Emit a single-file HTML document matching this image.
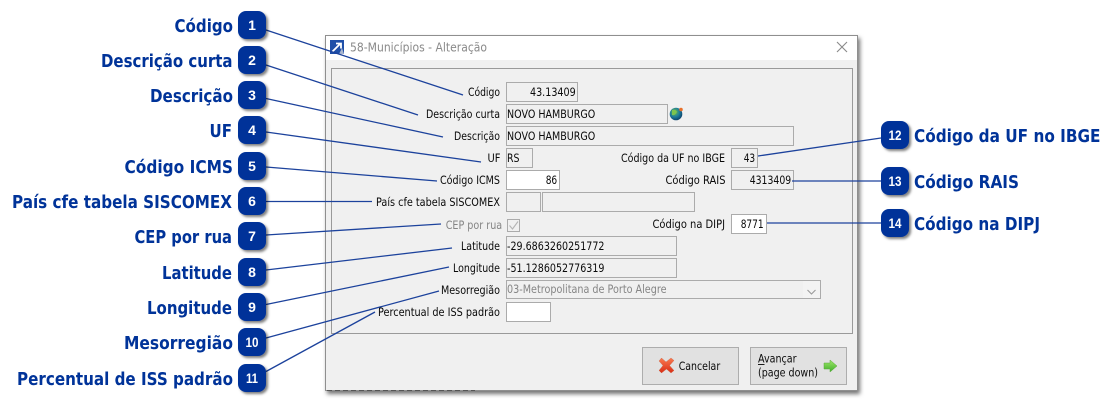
<!DOCTYPE html>
<html lang="pt">
<head>
<meta charset="utf-8">
<title>58-Municípios - Alteração</title>
<style>
html,body{margin:0;padding:0;background:#fff;width:1117px;height:407px;overflow:hidden}
svg{display:block}
.h{font-family:"DejaVu Sans",sans-serif;font-weight:700;font-size:17.5px;fill:#003399}
.n{font-family:"Liberation Sans",sans-serif;font-weight:700;font-size:14px;fill:#fff;text-anchor:middle}
.l{font-family:"DejaVu Sans",sans-serif;font-size:11.5px;fill:#0a0a0a}
.l.g{fill:#858585}
.f{fill:#f0f0f0;stroke:#ababab;stroke-width:1}
.w{fill:#fff;stroke:#ababab;stroke-width:1}
.ln{stroke:#1c429c;stroke-width:1.3;fill:none}
.b{fill:#e1e1e1;stroke:#adadad;stroke-width:1}
</style>
</head>
<body>
<svg width="1117" height="407" viewBox="0 0 1117 407" xmlns="http://www.w3.org/2000/svg">
<defs>
<filter id="s" x="-20%" y="-20%" width="150%" height="150%"><feDropShadow dx="2" dy="2" stdDeviation="1.3" flood-color="#000" flood-opacity=".5"/></filter>
<filter id="d" x="-3%" y="-3%" width="106%" height="106%"><feDropShadow dx="2" dy="3" stdDeviation="2" flood-color="#000" flood-opacity=".55"/></filter>
<radialGradient id="gl" cx=".4" cy=".35" r=".7"><stop offset="0" stop-color="#6fc04a"/><stop offset=".55" stop-color="#1c7a9c"/><stop offset="1" stop-color="#0c3d66"/></radialGradient>
<linearGradient id="ar" x1="0" y1="0" x2="0" y2="1"><stop offset="0" stop-color="#9fe86a"/><stop offset="1" stop-color="#3fae2a"/></linearGradient>
<linearGradient id="xr" x1="0" y1="0" x2="0" y2="1"><stop offset="0" stop-color="#f97a50"/><stop offset="1" stop-color="#d92c14"/></linearGradient>
</defs>

<!-- dialog -->
<rect x="325.5" y="35.5" width="532" height="355" fill="#f0f0f0" stroke="#8f8f8f" filter="url(#d)"/>
<rect x="326" y="36" width="531" height="24" fill="#fff"/>
<rect x="331.5" y="68.5" width="521" height="265" fill="#f0f0f0" stroke="#9a9a9a"/>
<path d="M327 390.500 H475" stroke="#555" stroke-width="1" stroke-dasharray="5 3"/>

<!-- title bar -->
<rect x="330" y="40" width="14" height="14" fill="#1f4fa8"/>
<path d="M332 52 L340 44 M336 43.5 H341 V48.5" stroke="#fff" stroke-width="1.8" fill="none"/>
<path d="M339 54 L342 48 L344 54 Z" fill="#a9b6cf"/>
<text x="350" y="51.500" font-family="DejaVu Sans,sans-serif" font-size="12.5" fill="#8a8a8a" textLength="137" lengthAdjust="spacingAndGlyphs">58-Municípios - Alteração</text>
<path d="M837 42 L847 52 M847 42 L837 52" stroke="#8a8a8a" stroke-width="1.1" fill="none"/>

<!-- fields -->
<rect class="f" x="506.5" y="82.5" width="71" height="19"/>
<rect class="f" x="506.5" y="104.5" width="161" height="19"/>
<rect class="f" x="506.5" y="126.5" width="287" height="19"/>
<rect class="f" x="506.5" y="148.5" width="26" height="19"/>
<rect class="w" x="506.5" y="170.5" width="53" height="19"/>
<rect class="f" x="506.5" y="192.5" width="34" height="19"/>
<rect class="f" x="542.5" y="192.5" width="152" height="19"/>
<rect class="f" x="507.5" y="219.5" width="12" height="12" stroke="#c4c4c4"/>
<path d="M509.5 225.5 L512.5 229 L518 221.5" stroke="#b4b4b4" stroke-width="1.1" fill="none"/>
<rect class="f" x="506.5" y="236.5" width="170" height="19"/>
<rect class="f" x="506.5" y="258.5" width="170" height="19"/>
<rect class="f" x="506.5" y="280.5" width="314" height="18"/>
<rect x="803" y="281" width="17" height="17" fill="#f3f3f3"/>
<path d="M807.5 290 L811.5 294 L815.5 290" stroke="#9a9a9a" stroke-width="1.1" fill="none"/>
<rect class="w" x="506.5" y="302.5" width="44" height="19"/>
<rect class="f" x="731.5" y="148.5" width="26" height="19"/>
<rect class="f" x="731.5" y="170.5" width="62" height="19"/>
<rect class="w" x="731.5" y="214.5" width="35" height="19"/>

<!-- globe -->
<circle cx="676" cy="114" r="6.3" fill="url(#gl)"/>
<path d="M672 110 Q676 109 677 112 Q675 116 672 115 Z" fill="#7cc44f"/>
<circle cx="681" cy="109.5" r="1.8" fill="#e8702a"/>

<!-- form labels -->
<text class="l" x="468" y="96" textLength="32" lengthAdjust="spacingAndGlyphs">Código</text>
<text class="l" x="426" y="118" textLength="74" lengthAdjust="spacingAndGlyphs">Descrição curta</text>
<text class="l" x="454" y="140" textLength="46" lengthAdjust="spacingAndGlyphs">Descrição</text>
<text class="l" x="487.5" y="162" textLength="13" lengthAdjust="spacingAndGlyphs">UF</text>
<text class="l" x="440" y="184" textLength="60" lengthAdjust="spacingAndGlyphs">Código ICMS</text>
<text class="l" x="376" y="206" textLength="124" lengthAdjust="spacingAndGlyphs">País cfe tabela SISCOMEX</text>
<text class="l g" x="445.7" y="229" textLength="56.5" lengthAdjust="spacingAndGlyphs">CEP por rua</text>
<text class="l" x="461" y="250" textLength="39" lengthAdjust="spacingAndGlyphs">Latitude</text>
<text class="l" x="453" y="272" textLength="47" lengthAdjust="spacingAndGlyphs">Longitude</text>
<text class="l" x="441" y="294" textLength="59" lengthAdjust="spacingAndGlyphs">Mesorregião</text>
<text class="l" x="378" y="316" textLength="122" lengthAdjust="spacingAndGlyphs">Percentual de ISS padrão</text>
<text class="l" x="621" y="162" textLength="104" lengthAdjust="spacingAndGlyphs">Código da UF no IBGE</text>
<text class="l" x="665.5" y="184" textLength="60" lengthAdjust="spacingAndGlyphs">Código RAIS</text>
<text class="l" x="652.5" y="228" textLength="72.5" lengthAdjust="spacingAndGlyphs">Código na DIPJ</text>

<!-- values -->
<text class="l" x="530" y="96" textLength="45.7" lengthAdjust="spacingAndGlyphs">43.13409</text>
<text class="l" x="507" y="118" textLength="88.3" lengthAdjust="spacingAndGlyphs">NOVO HAMBURGO</text>
<text class="l" x="507" y="140" textLength="88.3" lengthAdjust="spacingAndGlyphs">NOVO HAMBURGO</text>
<text class="l" x="507" y="162" textLength="12.5" lengthAdjust="spacingAndGlyphs">RS</text>
<text class="l" x="545.7" y="184" textLength="11.5" lengthAdjust="spacingAndGlyphs">86</text>
<text class="l" x="507" y="250" textLength="97.5" lengthAdjust="spacingAndGlyphs">-29.6863260251772</text>
<text class="l" x="507" y="272" textLength="97.5" lengthAdjust="spacingAndGlyphs">-51.1286052776319</text>
<text class="l g" x="507" y="293" textLength="159.5" lengthAdjust="spacingAndGlyphs">03-Metropolitana de Porto Alegre</text>
<text class="l" x="743.7" y="162" textLength="11.5" lengthAdjust="spacingAndGlyphs">43</text>
<text class="l" x="749.7" y="184" textLength="41.5" lengthAdjust="spacingAndGlyphs">4313409</text>
<text class="l" x="740.7" y="228" textLength="23" lengthAdjust="spacingAndGlyphs">8771</text>

<!-- buttons -->
<rect class="b" x="642.5" y="347.5" width="96" height="37"/>
<rect class="b" x="750.5" y="347.5" width="96" height="37"/>
<path d="M659 361 L661.5 358 L666 362 L671 358 L674 360.5 L669.5 365.5 L674 370.5 L671 373 L666.5 369 L661.5 373 L659 370.5 L663 365.5 Z" fill="url(#xr)" stroke="#c8694e" stroke-width=".4"/>
<text class="l" x="678.7" y="370" textLength="41.5" lengthAdjust="spacingAndGlyphs">Cancelar</text>
<text class="l" x="758" y="362.5" textLength="38.5" lengthAdjust="spacingAndGlyphs">Avançar</text>
<path d="M758 364.5 H764.5" stroke="#1a1a1a" stroke-width="1"/>
<text class="l" x="758" y="376.5" textLength="60" lengthAdjust="spacingAndGlyphs">(page down)</text>
<path d="M824 363 H830 V360 L837 366 L830 372 V369 H824 Z" fill="url(#ar)" stroke="#5aa83c" stroke-width=".5"/>

<!-- leader lines -->
<path class="ln" d="M266 30 L463 95"/>
<path class="ln" d="M266 65 L418 115"/>
<path class="ln" d="M266 98.500 L443 137"/>
<path class="ln" d="M266 132 L481 162"/>
<path class="ln" d="M266 167 L437 181"/>
<path class="ln" d="M266 201.500 L372 201.500"/>
<path class="ln" d="M266 235 L441 224"/>
<path class="ln" d="M266 270 L452 248"/>
<path class="ln" d="M266 304.500 L449 267"/>
<path class="ln" d="M266 338 L439 291"/>
<path class="ln" d="M266 371.500 L375 312"/>
<path class="ln" d="M758 156 L881 138"/>
<path class="ln" d="M792 181 H881"/>
<path class="ln" d="M767 223 H881"/>

<!-- number badges -->
<g fill="#003399" filter="url(#s)">
<rect x="238" y="11" width="28" height="28" rx="8"/>
<rect x="238" y="46" width="28" height="28" rx="8"/>
<rect x="238" y="81" width="28" height="28" rx="8"/>
<rect x="238" y="116" width="28" height="28" rx="8"/>
<rect x="238" y="152" width="28" height="28" rx="8"/>
<rect x="238" y="187" width="28" height="28" rx="8"/>
<rect x="238" y="222" width="28" height="28" rx="8"/>
<rect x="238" y="258" width="28" height="28" rx="8"/>
<rect x="238" y="293" width="28" height="28" rx="8"/>
<rect x="238" y="328" width="28" height="28" rx="8"/>
<rect x="238" y="364" width="28" height="28" rx="8"/>
<rect x="881" y="121" width="28" height="28" rx="8"/>
<rect x="881" y="167" width="28" height="28" rx="8"/>
<rect x="881" y="209" width="28" height="28" rx="8"/>
</g>
<text class="n" x="252" y="30">1</text>
<text class="n" x="252" y="65">2</text>
<text class="n" x="252" y="100">3</text>
<text class="n" x="252" y="135">4</text>
<text class="n" x="252" y="171">5</text>
<text class="n" x="252" y="206">6</text>
<text class="n" x="252" y="241">7</text>
<text class="n" x="252" y="277">8</text>
<text class="n" x="252" y="312">9</text>
<text class="n" x="252" y="347" textLength="13" lengthAdjust="spacingAndGlyphs">10</text>
<text class="n" x="252" y="383" textLength="12" lengthAdjust="spacingAndGlyphs">11</text>
<text class="n" x="895" y="140" textLength="13" lengthAdjust="spacingAndGlyphs">12</text>
<text class="n" x="895" y="186" textLength="13" lengthAdjust="spacingAndGlyphs">13</text>
<text class="n" x="895" y="228" textLength="13" lengthAdjust="spacingAndGlyphs">14</text>

<!-- headings -->
<text class="h" x="174.500" y="32" textLength="58.500" lengthAdjust="spacingAndGlyphs">Código</text>
<text class="h" x="101" y="67" textLength="131.500" lengthAdjust="spacingAndGlyphs">Descrição curta</text>
<text class="h" x="150" y="102" textLength="83" lengthAdjust="spacingAndGlyphs">Descrição</text>
<text class="h" x="209.500" y="137" textLength="22.500" lengthAdjust="spacingAndGlyphs">UF</text>
<text class="h" x="124.500" y="173" textLength="108.500" lengthAdjust="spacingAndGlyphs">Código ICMS</text>
<text class="h" x="12" y="208" textLength="220" lengthAdjust="spacingAndGlyphs">País cfe tabela SISCOMEX</text>
<text class="h" x="134.500" y="243" textLength="97.500" lengthAdjust="spacingAndGlyphs">CEP por rua</text>
<text class="h" x="162" y="279" textLength="70" lengthAdjust="spacingAndGlyphs">Latitude</text>
<text class="h" x="147" y="314" textLength="85" lengthAdjust="spacingAndGlyphs">Longitude</text>
<text class="h" x="124" y="349" textLength="109" lengthAdjust="spacingAndGlyphs">Mesorregião</text>
<text class="h" x="17" y="385" textLength="216" lengthAdjust="spacingAndGlyphs">Percentual de ISS padrão</text>
<text class="h" x="914" y="142" textLength="186.500" lengthAdjust="spacingAndGlyphs">Código da UF no IBGE</text>
<text class="h" x="914" y="188" textLength="105" lengthAdjust="spacingAndGlyphs">Código RAIS</text>
<text class="h" x="914" y="230" textLength="126" lengthAdjust="spacingAndGlyphs">Código na DIPJ</text>
</svg>
</body>
</html>
